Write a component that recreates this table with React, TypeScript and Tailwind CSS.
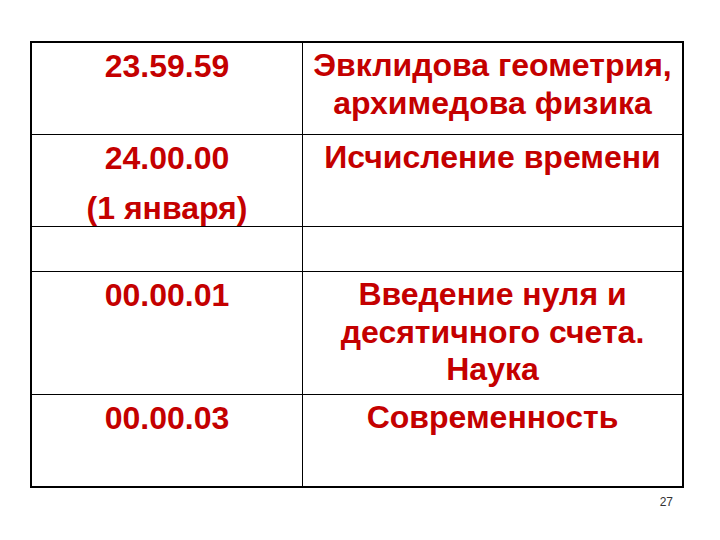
import React from "react";

const rows: { h: string; left: React.ReactNode; right: React.ReactNode }[] = [
  {
    h: "h-[92px] border-b",
    left: "23.59.59",
    right: (
      <>
        Эвклидова геометрия,
        <br />
        архимедова физика
      </>
    ),
  },
  {
    h: "h-[92px] border-b",
    left: (
      <>
        <div>24.00.00</div>
        <div className="mt-[12px]">(1 января)</div>
      </>
    ),
    right: "Исчисление времени",
  },
  { h: "h-[45px] border-b", left: "", right: "" },
  {
    h: "h-[123px] border-b",
    left: "00.00.01",
    right: (
      <>
        Введение нуля и
        <br />
        десятичного счета.
        <br />
        Наука
      </>
    ),
  },
  { h: "h-[91px]", left: "00.00.03", right: "Современность" },
];

export default function App() {
  return (
    <div
      className="w-[720px] h-[540px] bg-white overflow-hidden pt-[41px]"
      style={{ fontFamily: '"Liberation Sans", Arial, sans-serif' }}
    >
      <div className="ml-[30px] w-[654px] border-2 border-black flex flex-col">
        {rows.map((r, i) => (
          <div key={i} className={`flex border-black ${r.h}`}>
            <div className="w-[271px] shrink-0 border-r border-black pt-[5px] text-center text-[32px] leading-[37.5px] font-bold text-[#c40000]">
              {r.left}
            </div>
            <div className="flex-1 pt-[4px] text-center text-[32px] leading-[37.5px] font-bold text-[#c40000]">
              {r.right}
            </div>
          </div>
        ))}
      </div>
      <div className="mr-[47px] mt-[7px] text-right text-[12px] leading-[14px] text-[#333333]">
        27
      </div>
    </div>
  );
}
